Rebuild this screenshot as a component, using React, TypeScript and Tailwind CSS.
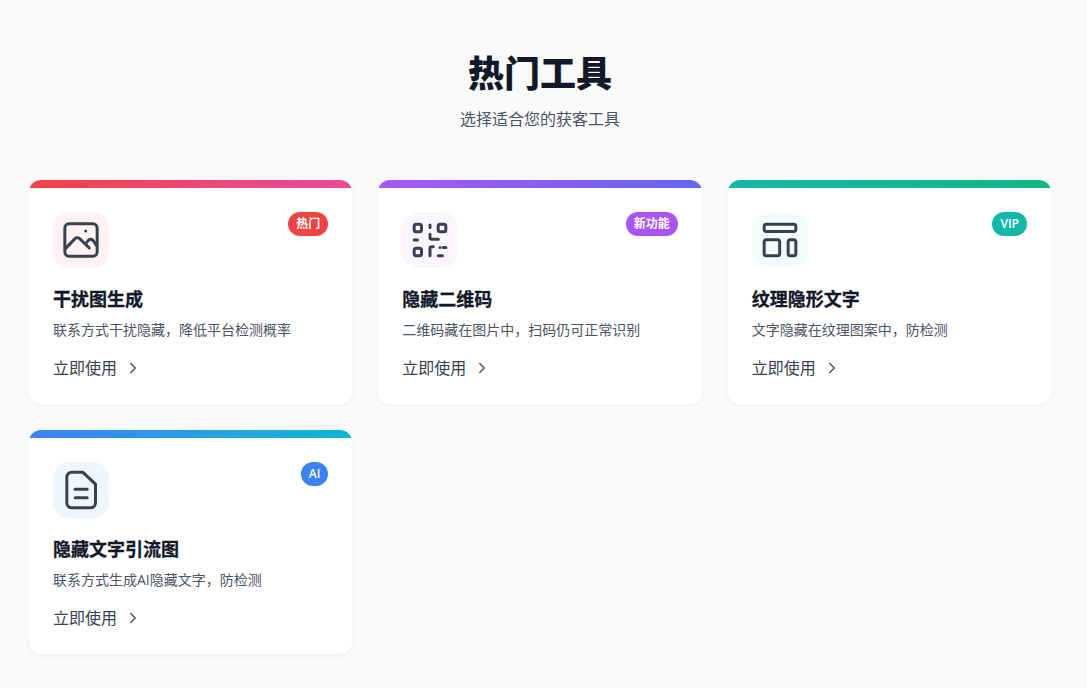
import React from "react";
import { ChevronRight } from "lucide-react";

const tools = [
  {
    title: "干扰图生成",
    desc: "联系方式干扰隐藏，降低平台检测概率",
    badge: "热门",
    bar: "from-[#ef4444] to-[#ec4899]",
    tint: "bg-[#fef2f2]",
    badgeBg: "bg-[#ef4444]",
    icon: (
      <>
        <rect x="2.3" y="2.3" width="19.4" height="19.4" rx="2.5" />
        <path d="M2.8 17 8.4 11.2a2 2 0 0 1 2.8 0L17 16.8" />
        <path d="M15 14l1.5-1.9a1.8 1.8 0 0 1 2.6 0l2.4 3.4" />
        <circle cx="14.8" cy="6.6" r="0.9" fill="#374151" stroke="none" />
      </>
    ),
  },
  {
    title: "隐藏二维码",
    desc: "二维码藏在图片中，扫码仍可正常识别",
    badge: "新功能",
    bar: "from-[#a855f7] to-[#6366f1]",
    tint: "bg-[#faf5ff]",
    badgeBg: "bg-[#a855f7]",
    icon: (
      <>
        <rect x="2.5" y="2.5" width="4.4" height="4.6" rx="1.2" />
        <rect x="16.9" y="2.5" width="4.6" height="4.6" rx="1.2" />
        <rect x="2.5" y="16.9" width="4.4" height="4.6" rx="1.2" />
        <path d="M12 3v1.5" />
        <path d="M12 8.5v2a1 1 0 0 0 1 1h4" />
        <path d="M2.5 12h2" />
        <path d="M12 21.5V17a1 1 0 0 1 1-1h1" />
        <path d="M18 16.5h.01" />
        <path d="M20 16.5h1.5" />
        <path d="M17 21.5h2.5" />
      </>
    ),
  },
  {
    title: "纹理隐形文字",
    desc: "文字隐藏在纹理图案中，防检测",
    badge: "VIP",
    bar: "from-[#14b8a6] to-[#10b981]",
    tint: "bg-[#f0fdfa]",
    badgeBg: "bg-[#14b8a6]",
    icon: (
      <>
        <rect x="2.5" y="2.5" width="19" height="4.4" rx="1.3" />
        <rect x="2.5" y="11.8" width="9.3" height="9.7" rx="1.3" />
        <rect x="16.9" y="11.8" width="4.6" height="9.7" rx="1.3" />
      </>
    ),
  },
  {
    title: "隐藏文字引流图",
    desc: "联系方式生成AI隐藏文字，防检测",
    badge: "AI",
    bar: "from-[#3b82f6] to-[#06b6d4]",
    tint: "bg-[#eff6ff]",
    badgeBg: "bg-[#3b82f6]",
    icon: (
      <>
        <path d="M6.5 1.3H13L20.7 8.5V19.7a3 3 0 0 1-3 3H6.5a3 3 0 0 1-3-3V4.3a3 3 0 0 1 3-3z" />
        <path d="M8.5 11.6h7.2" />
        <path d="M8.5 16.6h7.2" />
      </>
    ),
  },
];

const App = () => {
  return (
    <div
      className="min-h-[688px] bg-[#f9fafb] pl-[29px] pr-[36px] pt-[50px] pb-[34px]"
      style={{ fontFamily: '"Open Sans", "Noto Sans CJK SC", sans-serif' }}
    >
      <div className="text-center mb-[49px]">
        <h2 className="text-[36px] leading-[48px] font-extrabold text-[#111827]">热门工具</h2>
        <p className="mt-[9px] text-base leading-6 text-[#4b5563]">选择适合您的获客工具</p>
      </div>

      <div className="grid grid-cols-3 gap-[26px]">
        {tools.map((t) => (
          <div
            key={t.title}
            className="bg-white rounded-xl overflow-hidden shadow-[0_1px_6px_rgba(0,0,0,0.05)]"
          >
            <div className={`h-2 bg-gradient-to-r ${t.bar}`} />
            <div className="p-6">
              <div className="flex items-start justify-between">
                <div className={`w-14 h-14 rounded-2xl flex items-center justify-center ${t.tint}`}>
                  <svg
                    width="40"
                    height="40"
                    viewBox="0 0 24 24"
                    fill="none"
                    stroke="#374151"
                    strokeWidth="1.8"
                    strokeLinecap="round"
                    strokeLinejoin="round"
                  >
                    {t.icon}
                  </svg>
                </div>
                <span className={`px-2 h-6 leading-6 rounded-full text-xs font-semibold text-white ${t.badgeBg}`}>
                  {t.badge}
                </span>
              </div>
              <h3 className="mt-[17px] text-lg leading-7 font-bold [-webkit-text-stroke:0.3px_#111827] text-[#111827]">{t.title}</h3>
              <p className="mt-[7px] text-sm leading-5 text-[#4b5563]">{t.desc}</p>
              <div className="mt-[16px] flex items-center text-[#374151] text-base leading-6">
                <span>立即使用</span>
                <ChevronRight className="ml-[7px] w-[18px] h-[18px] text-[#4b5563]" />
              </div>
            </div>
          </div>
        ))}
      </div>
    </div>
  );
};

export default App;
